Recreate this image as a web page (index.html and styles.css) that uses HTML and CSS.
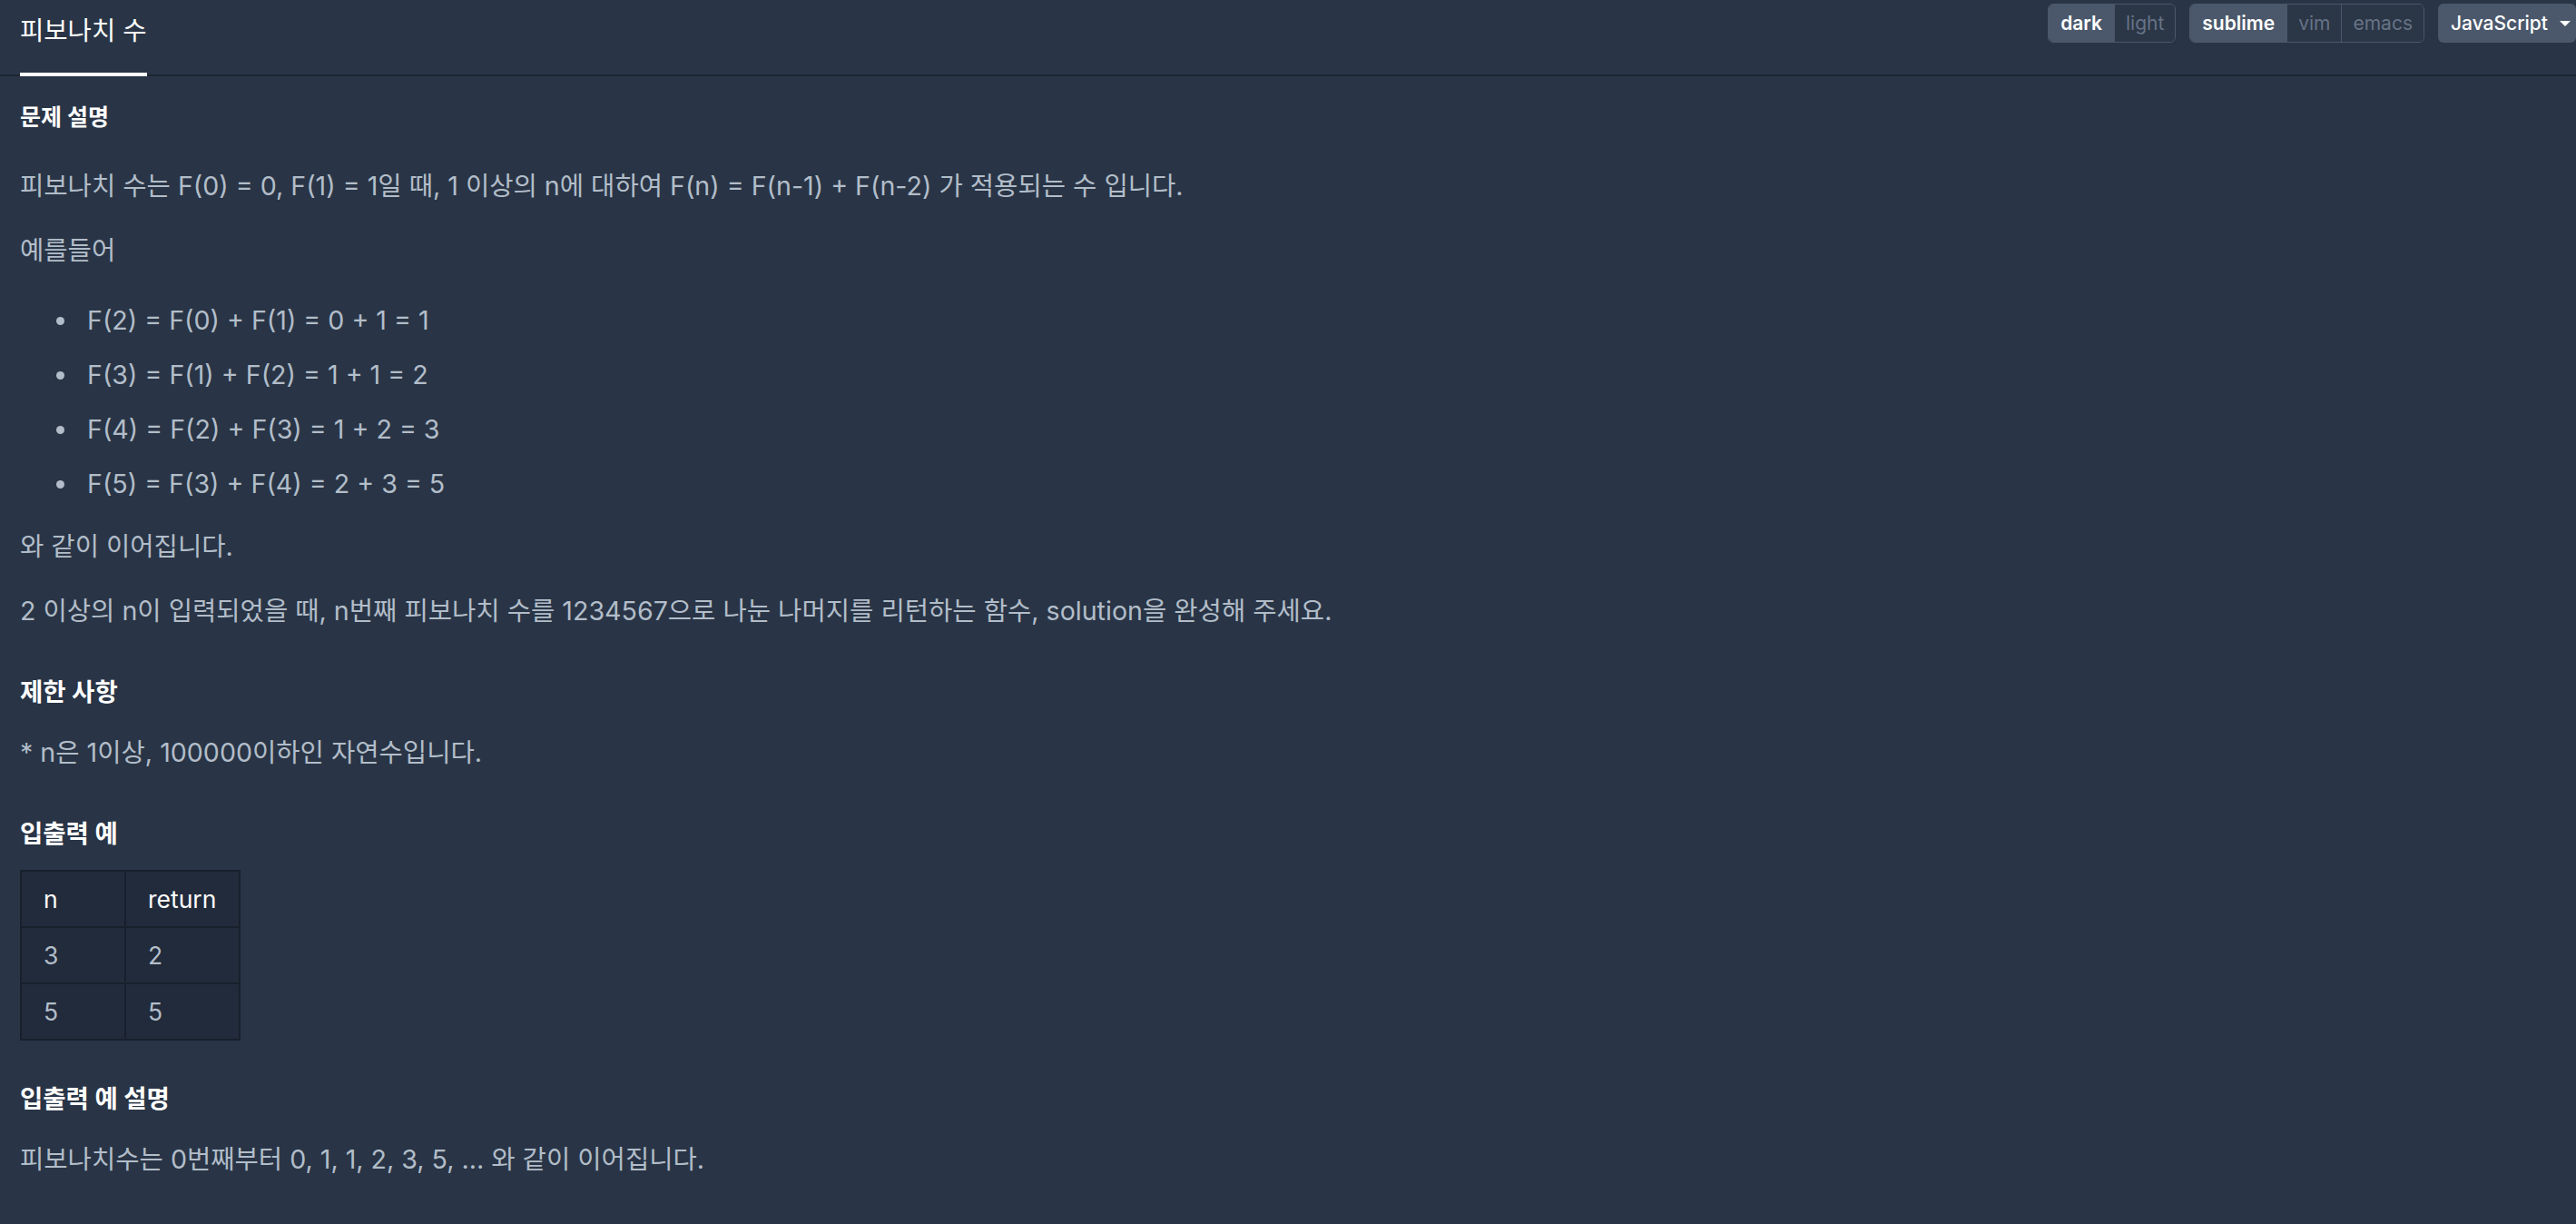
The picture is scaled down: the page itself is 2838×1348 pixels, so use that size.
FILE: index.html
```html
<!DOCTYPE html>
<html lang="ko">
<head>
    <meta charset="UTF-8">
    <meta name="viewport" content="width=device-width, initial-scale=1.0">
    <title>피보나치 수</title>
    <link rel="stylesheet" href="styles.css">
</head>
<body>
    <!-- Top bar: tab + editor options -->
    <div class="header">
        <div class="tab active">피보나치 수</div>
        <div class="toolbar">
            <div class="btn-group">
                <button class="btn active">dark</button>
                <button class="btn">light</button>
            </div>
            <div class="btn-group">
                <button class="btn active">sublime</button>
                <button class="btn">vim</button>
                <button class="btn">emacs</button>
            </div>
            <button class="btn lang">JavaScript <span class="caret"></span></button>
        </div>
    </div>

    <!-- Problem description -->
    <div class="content">
        <h6 class="section-title">문제 설명</h6>
        <p>피보나치 수는 F(0) = 0, F(1) = 1일 때, 1 이상의 n에 대하여 F(n) = F(n-1) + F(n-2) 가 적용되는 수 입니다.</p>
        <p>예를들어</p>
        <ul>
            <li>F(2) = F(0) + F(1) = 0 + 1 = 1</li>
            <li>F(3) = F(1) + F(2) = 1 + 1 = 2</li>
            <li>F(4) = F(2) + F(3) = 1 + 2 = 3</li>
            <li>F(5) = F(3) + F(4) = 2 + 3 = 5</li>
        </ul>
        <p>와 같이 이어집니다.</p>
        <p>2 이상의 n이 입력되었을 때, n번째 피보나치 수를 1234567으로 나눈 나머지를 리턴하는 함수, solution을 완성해 주세요.</p>

        <h5>제한 사항</h5>
        <p>* n은 1이상, 100000이하인 자연수입니다.</p>

        <h5 class="table-title">입출력 예</h5>
        <table>
            <thead>
                <tr><th class="col-n">n</th><th class="col-ret">return</th></tr>
            </thead>
            <tbody>
                <tr><td>3</td><td>2</td></tr>
                <tr><td>5</td><td>5</td></tr>
            </tbody>
        </table>

        <h5>입출력 예 설명</h5>
        <p>피보나치수는 0번째부터 0, 1, 1, 2, 3, 5, ... 와 같이 이어집니다.</p>
    </div>
</body>
</html>
```

FILE: styles.css
```css
body {
    margin: 0;
    background-color: #293546;
    font-family: Inter, "Noto Sans CJK KR", sans-serif;
    color: #b2bdc9;
}

/* Header */
.header {
    display: flex;
    justify-content: space-between;
    height: 84px;
    box-shadow: inset 0 -2px 0 #1c2533;
}
.tab {
    margin-left: 22px;
    padding-top: 15px;
    height: 65px;
    font-size: 28.6px;
    line-height: 38px;
    color: #ffffff;
    border-bottom: 4px solid #ffffff;
}

/* Editor options */
.toolbar {
    display: flex;
    gap: 15px;
    margin-top: 4px;
    align-self: flex-start;
}
.btn-group {
    display: flex;
    border: 1px solid #4b586b;
    border-radius: 6px;
    overflow: hidden;
}
.btn {
    height: 41px;
    padding: 0 12px;
    border: none;
    background-color: #2b3647;
    color: #667385;
    font-family: Inter, sans-serif;
    font-size: 21px;
    cursor: pointer;
}
.btn + .btn {
    border-left: 1px solid #4b586b;
}
.btn.active {
    background-color: #4b586b;
    color: #ffffff;
    font-weight: 600;
    padding: 0 13px;
}
.btn.lang {
    height: 43px;
    display: flex;
    align-items: center;
    gap: 13px;
    padding: 0 6px 0 14px;
    border-radius: 6px;
    background-color: #4b586b;
    color: #ffffff;
    font-weight: 500;
}
.caret {
    width: 0;
    height: 0;
    border-left: 6px solid transparent;
    border-right: 6px solid transparent;
    border-top: 6px solid #ffffff;
}

/* Content */
.content {
    padding: 28px 22px 40px;
    font-size: 28.6px;
    line-height: 42px;
}
.section-title {
    margin: 0 0 38px;
    font-size: 25px;
    line-height: 34px;
    font-weight: 700;
    color: #ffffff;
}
h5 {
    margin: 50px 0 28px;
    font-size: 27.5px;
    line-height: 36px;
    font-weight: 700;
    color: #ffffff;
}
h5.table-title {
    margin-bottom: 22px;
}
table + h5 {
    margin-top: 46px;
}
p {
    margin: 0 0 29px;
}
ul {
    margin: 35px 0 27px;
    padding-left: 40px;
    list-style: none;
}
li {
    display: flex;
    align-items: center;
    margin-bottom: 18px;
}
li::before {
    content: "";
    width: 9px;
    height: 9px;
    margin-right: 25px;
    border-radius: 50%;
    background-color: #b2bdc9;
}

/* Example table */
table {
    border-collapse: collapse;
    font-size: 26.5px;
}
th, td {
    height: 60px;
    padding: 0 22px 0 24px;
    text-align: left;
    font-weight: 400;
    background-color: #212b3b;
    border: 2px solid #18202c;
}
th {
    color: #ffffff;
}
.col-n {
    width: 67px;
}
.col-ret {
    width: 78px;
}
```
